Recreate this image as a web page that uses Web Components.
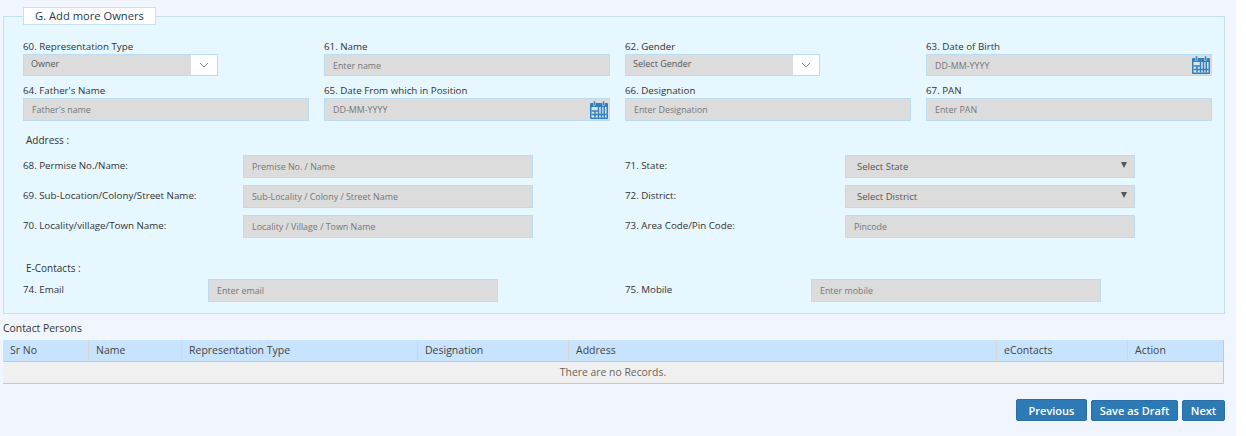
<!DOCTYPE html>
<html>
<head>
<meta charset="utf-8">
<title>Add more Owners</title>
<style>
  html, body { margin: 0; padding: 0; background: #fff; }
  body { font-family: "Open Sans", sans-serif; color: #333; font-size: 10px; }
</style>
</head>
<body>
<owner-page></owner-page>

<script>
// ----------------------- ICONS -----------------------
const calendarIcon = `
  <svg width="18" height="18" viewBox="0 0 18 18">
    <rect x="0" y="2" width="18" height="16" rx="1" fill="#3480bd"/>
    <rect x="3.5" y="0" width="2" height="4.5" fill="#3480bd" stroke="#d8e6ef" stroke-width=".5"/>
    <rect x="12.5" y="0" width="2" height="4.5" fill="#3480bd" stroke="#d8e6ef" stroke-width=".5"/>
    <rect x="1.5" y="6" width="15" height="10.5" fill="#dbe6ee"/>
    <path d="M1.5 10h7M1.5 13.5h15M5 10v6.5M8.5 6v10.5M11.5 6v10.5M14.3 6v10.5" stroke="#3480bd" stroke-width="1.5" fill="none"/>
  </svg>`;

// ----------------------- TEXT INPUT -----------------------
class FormInput extends HTMLElement {
  constructor() {
    super();
    this.attachShadow({ mode: "open" });
    const date = this.hasAttribute("date");
    this.shadowRoot.innerHTML = `
      <style>
        :host {
          display: flex;
          align-items: center;
          box-sizing: border-box;
          height: 23px;
          padding-left: 8px;
          background: #dcdcdc;
          border: 1px solid #bcdcf2;
          color: #777;
          font: 8.9px "Open Sans", sans-serif;
        }
        span { flex: 1; white-space: nowrap; }
        .cal { display: flex; margin-right: 1px; }
      </style>
      <span>${this.getAttribute("placeholder") || ""}</span>
      ${date ? `<div class="cal">${calendarIcon}</div>` : ""}
    `;
  }
}
customElements.define("form-input", FormInput);

// ----------------------- SELECT WITH CHEVRON (top rows) -----------------------
class ChevronSelect extends HTMLElement {
  constructor() {
    super();
    this.attachShadow({ mode: "open" });
    this.shadowRoot.innerHTML = `
      <style>
        :host {
          display: flex;
          box-sizing: border-box;
          width: 195px;
          height: 22px;
          background: #dcdcdc;
          border: 1px solid #bcdcf2;
          color: #555;
          font: 9px "Open Sans", sans-serif;
        }
        span { flex: 1; padding: 2px 0 0 7px; white-space: nowrap; }
        .arrow {
          width: 26px;
          background: #fff;
          display: flex;
          align-items: center;
          justify-content: center;
        }
      </style>
      <span>${this.getAttribute("value")}</span>
      <div class="arrow">
        <svg width="10" height="6" viewBox="0 0 10 6"><path d="M1 1l4 4 4-4" fill="none" stroke="#888" stroke-width="1"/></svg>
      </div>
    `;
  }
}
customElements.define("chevron-select", ChevronSelect);

// ----------------------- NATIVE-LOOKING SELECT -----------------------
class PlainSelect extends HTMLElement {
  constructor() {
    super();
    this.attachShadow({ mode: "open" });
    this.shadowRoot.innerHTML = `
      <style>
        :host {
          display: flex;
          align-items: center;
          box-sizing: border-box;
          height: 23px;
          padding: 0 7px 0 11px;
          background: #dcdcdc;
          border: 1px solid #bcdcf2;
          color: #555;
          font: 9.5px "Open Sans", sans-serif;
        }
        span { flex: 1; }
        i {
          width: 0; height: 0;
          margin-top: -3px;
          border-left: 3px solid transparent;
          border-right: 3px solid transparent;
          border-top: 6px solid #555;
        }
      </style>
      <span>${this.getAttribute("value")}</span><i></i>
    `;
  }
}
customElements.define("plain-select", PlainSelect);

// ----------------------- LABEL ABOVE CONTROL -----------------------
class StackField extends HTMLElement {
  constructor() {
    super();
    this.attachShadow({ mode: "open" });
    this.shadowRoot.innerHTML = `
      <style>
        :host { display: block; }
        label {
          display: block;
          height: 14px;
          font: 9.75px/13px "Open Sans", sans-serif;
          color: #333;
          white-space: nowrap;
        }
      </style>
      <label>${this.getAttribute("label")}</label>
      <slot></slot>
    `;
  }
}
customElements.define("stack-field", StackField);

// ----------------------- LABEL BESIDE CONTROL -----------------------
class InlineField extends HTMLElement {
  constructor() {
    super();
    this.attachShadow({ mode: "open" });
    const w = this.getAttribute("label-width") || "220";
    this.shadowRoot.innerHTML = `
      <style>
        :host {
          display: grid;
          grid-template-columns: ${w}px 290px;
          align-items: start;
          height: 23px;
        }
        label {
          font: 9.75px/13px "Open Sans", sans-serif;
          color: #333;
          padding-top: 4px;
          white-space: nowrap;
        }
      </style>
      <label>${this.getAttribute("label")}</label>
      <slot></slot>
    `;
  }
}
customElements.define("inline-field", InlineField);

// ----------------------- FIELDSET PANEL -----------------------
class OwnerPanel extends HTMLElement {
  constructor() {
    super();
    this.attachShadow({ mode: "open" });
    this.shadowRoot.innerHTML = `
      <style>
        :host {
          display: block;
          box-sizing: border-box;
          position: relative;
          width: 1222px;
          height: 298px;
          margin: 16px 0 0 3px;
          padding: 23px 12px 0 19px;
          background: #e6f7ff;
          border: 1px solid #c5dff2;
        }
        .legend {
          position: absolute;
          left: 19px;
          top: -10px;
          box-sizing: border-box;
          width: 133px;
          height: 18px;
          padding-left: 11px;
          background: #fff;
          border: 1px solid #c5dff2;
          font: 11.2px/16px "Open Sans", sans-serif;
          color: #1c3a55;
        }
      </style>
      <div class="legend">${this.getAttribute("legend")}</div>
      <slot></slot>
    `;
  }
}
customElements.define("owner-panel", OwnerPanel);

// ----------------------- CONTACT TABLE -----------------------
class ContactTable extends HTMLElement {
  constructor() {
    super();
    this.attachShadow({ mode: "open" });
    const cols = [
      ["Sr No", 86], ["Name", 93], ["Representation Type", 236], ["Designation", 151],
      ["Address", 428], ["eContacts", 131], ["Action", 95],
    ];
    this.shadowRoot.innerHTML = `
      <style>
        :host {
          display: block;
          width: 1221px;
          margin-left: 3px;
          font-family: "Open Sans", sans-serif;
        }
        .title { height: 19px; padding-top: 7px; font-size: 10.4px; line-height: 14px; color: #333; box-sizing: content-box; }
        .head {
          display: grid;
          grid-template-columns: ${cols.map((c) => c[1] + "px").join(" ")};
          height: 21px;
          background: #c8e3fd;
          border-bottom: 1px solid #c8c8c8;
          border-right: 1px solid #c8c8c8;
          box-sizing: content-box;
        }
        .head div {
          padding-left: 7px;
          border-right: 1px solid #d8d8d0;
          font-size: 10.5px;
          line-height: 21px;
          color: #444;
          box-sizing: border-box;
        }
        .head div:last-child { border-right: none; }
        .empty {
          height: 21px;
          background: #f0f0f0;
          border-bottom: 1px solid #c8c8c8;
          border-right: 1px solid #c8c8c8;
          text-align: center;
          font-size: 10.4px;
          line-height: 21px;
          color: #6b6258;
        }
      </style>
      <div class="title">Contact Persons</div>
      <div class="head">${cols.map((c) => `<div>${c[0]}</div>`).join("")}</div>
      <div class="empty">There are no Records.</div>
    `;
  }
}
customElements.define("contact-table", ContactTable);

// ----------------------- BUTTON -----------------------
class ActionButton extends HTMLElement {
  constructor() {
    super();
    this.attachShadow({ mode: "open" });
    this.shadowRoot.innerHTML = `
      <style>
        :host {
          display: flex;
          align-items: center;
          justify-content: center;
          box-sizing: border-box;
          height: 21px;
          background: #2d7ab5;
          border: 1px solid #2a6ea5;
          border-radius: 2px;
          color: #fff;
          font: 600 11px "Open Sans", sans-serif;
          white-space: nowrap;
        }
      </style>
      <slot></slot>
    `;
  }
}
customElements.define("action-button", ActionButton);

// ----------------------- PAGE -----------------------
class OwnerPage extends HTMLElement {
  constructor() {
    super();
    this.attachShadow({ mode: "open" });
    this.shadowRoot.innerHTML = `
      <style>
        :host {
          display: block;
          width: 1236px;
          height: 436px;
          overflow: hidden;
          background: #f1f6fe;
        }
        .top {
          display: grid;
          grid-template-columns: repeat(4, 286px);
          column-gap: 15px;
          row-gap: 8px;
        }
        .heading {
          margin-left: 3px;
          font: 10px/14px "Open Sans", sans-serif;
          color: #333;
        }
        .address {
          display: grid;
          grid-template-columns: 602px 510px;
          row-gap: 7px;
        }
        .econtacts {
          display: grid;
          grid-template-columns: 602px 476px;
        }
        .buttons {
          display: flex;
          justify-content: flex-end;
          align-items: flex-end;
          gap: 4px;
          width: 1225px;
          margin-top: 15px;
        }
      </style>
      <owner-panel legend="G. Add more Owners">
        <div class="top">
          <stack-field label="60. Representation Type"><chevron-select value="Owner"></chevron-select></stack-field>
          <stack-field label="61. Name"><form-input style="height:22px" placeholder="Enter name"></form-input></stack-field>
          <stack-field label="62. Gender"><chevron-select value="Select Gender"></chevron-select></stack-field>
          <stack-field label="63. Date of Birth"><form-input style="height:22px" placeholder="DD-MM-YYYY" date></form-input></stack-field>
          <stack-field label="64. Father's Name"><form-input placeholder="Father's name"></form-input></stack-field>
          <stack-field label="65. Date From which in Position"><form-input placeholder="DD-MM-YYYY" date></form-input></stack-field>
          <stack-field label="66. Designation"><form-input placeholder="Enter Designation"></form-input></stack-field>
          <stack-field label="67. PAN"><form-input placeholder="Enter PAN"></form-input></stack-field>
        </div>

        <div class="heading" style="margin-top:12px;margin-bottom:8px">Address :</div>
        <div class="address">
          <inline-field label="68. Permise No./Name:"><form-input placeholder="Premise No. / Name"></form-input></inline-field>
          <inline-field label="71. State:"><plain-select value="Select State"></plain-select></inline-field>
          <inline-field label="69. Sub-Location/Colony/Street Name:"><form-input placeholder="Sub-Locality / Colony / Street Name"></form-input></inline-field>
          <inline-field label="72. District:"><plain-select value="Select District"></plain-select></inline-field>
          <inline-field label="70. Locality/village/Town Name:"><form-input placeholder="Locality / Village / Town Name"></form-input></inline-field>
          <inline-field label="73. Area Code/Pin Code:"><form-input placeholder="Pincode"></form-input></inline-field>
        </div>

        <div class="heading" style="margin-top:23px;margin-bottom:4px">E-Contacts :</div>
        <div class="econtacts">
          <inline-field label="74. Email" label-width="185"><form-input placeholder="Enter email"></form-input></inline-field>
          <inline-field label="75. Mobile" label-width="186"><form-input placeholder="Enter mobile"></form-input></inline-field>
        </div>
      </owner-panel>

      <contact-table></contact-table>

      <div class="buttons">
        <action-button style="width:71px;height:22px">Previous</action-button>
        <action-button style="width:87px">Save as Draft</action-button>
        <action-button style="width:43px">Next</action-button>
      </div>
    `;
  }
}
customElements.define("owner-page", OwnerPage);
</script>
</body>
</html>
